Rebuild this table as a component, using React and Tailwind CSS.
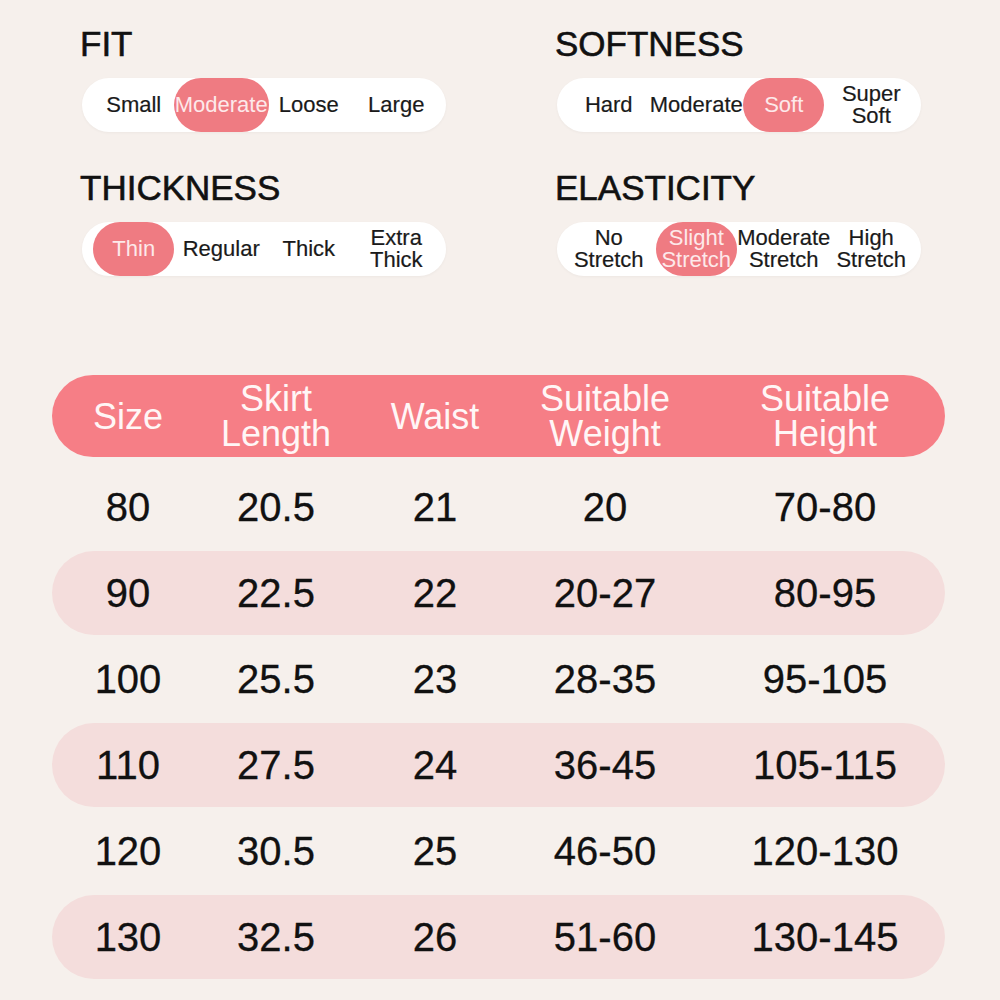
const FONT = { fontFamily: '"Liberation Sans", Arial, sans-serif' }

const SCALES = [
  {
    title: 'FIT',
    selected: 1,
    width: 'w-[95px]',
    options: [['Small'], ['Moderate'], ['Loose'], ['Large']],
  },
  {
    title: 'SOFTNESS',
    selected: 2,
    width: 'w-[81px]',
    options: [['Hard'], ['Moderate'], ['Soft'], ['Super', 'Soft']],
  },
  {
    title: 'THICKNESS',
    selected: 0,
    width: 'w-[81px]',
    options: [['Thin'], ['Regular'], ['Thick'], ['Extra', 'Thick']],
  },
  {
    title: 'ELASTICITY',
    selected: 1,
    width: 'w-[81px]',
    options: [['No', 'Stretch'], ['Slight', 'Stretch'], ['Moderate', 'Stretch'], ['High', 'Stretch']],
  },
]

const ROWS = [
  ['80', '20.5', '21', '20', '70-80'],
  ['90', '22.5', '22', '20-27', '80-95'],
  ['100', '25.5', '23', '28-35', '95-105'],
  ['110', '27.5', '24', '36-45', '105-115'],
  ['120', '30.5', '25', '46-50', '120-130'],
  ['130', '32.5', '26', '51-60', '130-145'],
]

const HEADERS = [['Size'], ['Skirt', 'Length'], ['Waist'], ['Suitable', 'Weight'], ['Suitable', 'Height']]

function Scale({ title, options, selected, width }) {
  return (
    <div className="w-[364px]">
      <h2 className="text-[35px] leading-[35px] text-[#111] -ml-[2px] mb-[17px] [-webkit-text-stroke:0.6px_#111]">{title}</h2>
      <div className="h-[54px] rounded-full bg-white shadow-[0_1px_3px_rgba(0,0,0,0.04)] grid grid-cols-4 pl-[8px] pr-[6px]">
        {options.map((lines, i) => (
          <div key={i} className="flex items-center justify-center">
            {i === selected ? (
              <div className={`${width} shrink-0 h-[54px] rounded-full bg-[#ef7b82] flex flex-col items-center justify-center text-[#fde9ea] text-[22px] leading-[22px] text-center`}>
                {lines.map((l) => <div key={l}>{l}</div>)}
              </div>
            ) : (
              <div className="flex flex-col items-center text-[#1a1a1a] text-[22px] leading-[22px] text-center whitespace-nowrap [-webkit-text-stroke:0.2px_#1a1a1a]">
                {lines.map((l) => <div key={l}>{l}</div>)}
              </div>
            )}
          </div>
        ))}
      </div>
    </div>
  )
}

export default function App() {
  return (
    <div className="w-[1000px] h-[1000px] bg-[#f6f0ec] overflow-hidden" style={FONT}>
      {/* Rating scales */}
      <div className="pt-[26px] pl-[82px] grid grid-cols-[364px_364px] gap-x-[111px] gap-y-[38px]">
        {SCALES.map((s) => <Scale key={s.title} {...s} />)}
      </div>

      {/* Size table */}
      <div className="mt-[99px] mx-[52px] w-[893px]">
        <div className="h-[82px] rounded-full bg-[#f67e86] grid grid-cols-[152px_144px_174px_166px_1fr] text-[#fff6f6] text-[36px] leading-[35px]">
          {HEADERS.map((lines, i) => (
            <div key={i} className={`flex flex-col items-center justify-center text-center ${i === 4 ? 'pl-[17px]' : ''}`}>
              {lines.map((l) => <div key={l}>{l}</div>)}
            </div>
          ))}
        </div>
        <div className="mt-[8px] flex flex-col gap-[2px]">
          {ROWS.map((row, r) => (
            <div
              key={row[0]}
              className={`h-[84px] rounded-full grid grid-cols-[152px_144px_174px_166px_1fr] text-[40px] text-[#111] [-webkit-text-stroke:0.3px_#111] ${r % 2 === 1 ? 'bg-[#f4dddc]' : ''}`}
            >
              {row.map((v, i) => (
                <div key={i} className={`flex items-center justify-center ${i === 4 ? 'pl-[17px]' : ''}`}>
                  {v}
                </div>
              ))}
            </div>
          ))}
        </div>
      </div>
    </div>
  )
}
